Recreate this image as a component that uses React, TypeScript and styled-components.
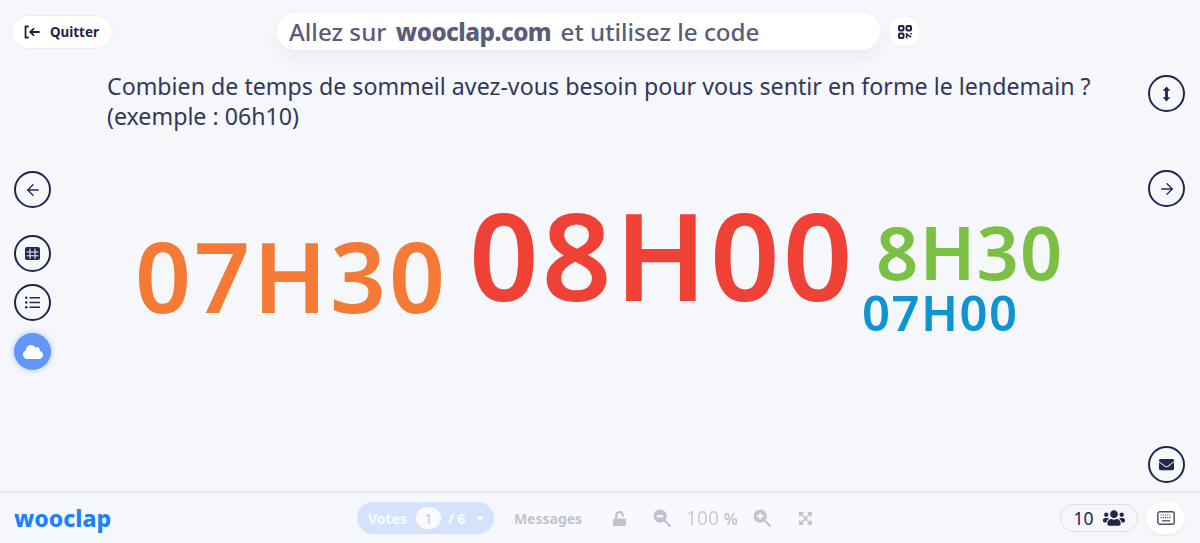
import styled, { createGlobalStyle } from "styled-components";
import { ArrowLeft, ArrowRight } from "lucide-react";
import { FaCaretDown, FaCloud, FaEnvelope, FaExpandArrowsAlt, FaUnlock, FaUsers } from "react-icons/fa";

const GlobalStyle = createGlobalStyle`
  html, body { margin: 0; padding: 0; background: #f5f7fb; }
  body { font-family: "Noto Sans", "Open Sans", sans-serif; color: #2a2e52; }
`;

const Page = styled.div`
  width: 1200px;
  height: 543px;
  display: flex;
  flex-direction: column;
  overflow: hidden;
  background: #f5f7fb;
`;

const TopBar = styled.header`
  height: 64px;
  flex: none;
  display: flex;
  align-items: flex-start;
`;

const QuitButton = styled.button`
  margin: 15px 0 0 11px;
  width: 102px;
  height: 34px;
  box-sizing: border-box;
  border: 1.5px solid #eceef6;
  border-radius: 17px;
  background: #fff;
  display: flex;
  align-items: center;
  gap: 10px;
  padding: 0 0 0 12px;
  font: 700 13.4px "Noto Sans", sans-serif;
  color: #1f2347;
`;

const CodeBanner = styled.div`
  margin: 13px 0 0 164px;
  width: 603px;
  height: 37px;
  box-sizing: border-box;
  padding-left: 12px;
  border-radius: 19px;
  background: #fff;
  box-shadow: 0 8px 16px rgba(40, 44, 90, 0.05);
  display: flex;
  align-items: center;
  white-space: pre;
  font-size: 24.2px;
  font-weight: 500;
  color: #5c5c7a;

  b {
    margin: 0 3px;
    font-weight: 800;
    letter-spacing: -0.5px;
  }
`;

const QrButton = styled.button`
  margin: 15px 0 0 8px;
  width: 33px;
  height: 33px;
  padding: 0;
  border: 1.5px solid #eceef6;
  border-radius: 50%;
  background: #fff;
  display: flex;
  align-items: center;
  justify-content: center;
`;

const Body = styled.main`
  flex: 1;
  display: flex;
  min-height: 0;
`;

const LeftRail = styled.nav`
  width: 66px;
  flex: none;
  box-sizing: border-box;
  padding: 107px 0 0 14px;
  display: flex;
  flex-direction: column;
  gap: 12px;
`;

const RightRail = styled.nav`
  width: 68px;
  flex: none;
  box-sizing: border-box;
  padding: 11px 0 8px 16px;
  display: flex;
  flex-direction: column;
`;

const RoundButton = styled.button<{ $active?: boolean; $mt?: string }>`
  width: 37px;
  height: 37px;
  flex: none;
  padding: 0;
  margin-top: ${(p) => p.$mt ?? "0"};
  box-sizing: border-box;
  border-radius: 50%;
  border: ${(p) => (p.$active ? "none" : "2px solid #23274d")};
  background: ${(p) => (p.$active ? "#6197f8" : "transparent")};
  box-shadow: ${(p) => (p.$active ? "0 0 6px rgba(97, 151, 248, 0.5)" : "none")};
  color: ${(p) => (p.$active ? "#fff" : "#23274d")};
  display: flex;
  align-items: center;
  justify-content: center;
`;

const Content = styled.section`
  flex: 1;
  min-width: 0;
  display: flex;
  flex-direction: column;
  padding-left: 41px;
`;

const Question = styled.h1`
  margin: 7px 0 0;
  font-size: 23.2px;
  font-weight: 400;
  line-height: 30px;
  color: #33375a;
  white-space: nowrap;
`;

const Cloud = styled.div`
  flex: 1;
  position: relative;
`;

const Word = styled.span<{ $x: number; $y: number; $size: number; $spacing: number; $color: string }>`
  position: absolute;
  left: ${(p) => p.$x}px;
  top: ${(p) => p.$y}px;
  font-size: ${(p) => p.$size}px;
  line-height: 0.8;
  font-weight: 600;
  letter-spacing: ${(p) => p.$spacing}em;
  color: ${(p) => p.$color};
  white-space: nowrap;
`;

const Footer = styled.footer`
  height: 52px;
  flex: none;
  box-sizing: border-box;
  border-top: 2px solid #e8e9ef;
  display: flex;
  align-items: center;
`;

const Logo = styled.div`
  margin-left: 14px;
  width: 343px;
  font-size: 23px;
  font-weight: 800;
  color: #1d83f5;
`;

const FadedGroup = styled.div`
  display: flex;
  align-items: center;
  opacity: 0.42;
`;

const VotesPill = styled.div`
  width: 137px;
  height: 32px;
  border-radius: 16px;
  background: #a9c7fb;
  color: #fff;
  display: flex;
  align-items: center;
  box-sizing: border-box;
  padding-left: 11px;
  font-size: 14px;
  font-weight: 700;
`;

const VoteCount = styled.span`
  width: 25px;
  height: 22px;
  margin: 0 7px 0 9px;
  border-radius: 12px;
  background: #fff;
  color: #8d90a8;
  font-weight: 400;
  font-size: 15px;
  display: flex;
  align-items: center;
  justify-content: center;
`;

const Caret = styled(FaCaretDown)`
  margin-left: 7px;
`;

const GhostPill = styled.div<{ $w: number; $ml: number }>`
  width: ${(p) => p.$w}px;
  height: 32px;
  margin-left: ${(p) => p.$ml}px;
  flex: none;
  box-sizing: border-box;
  border-radius: 16px;
  background: #fbfcff;
  color: #7a7d96;
  display: flex;
  align-items: center;
  justify-content: center;
  font-size: 14px;
  font-weight: 700;
`;

const ZoomValue = styled.span`
  width: 82px;
  text-align: center;
  font-size: 19px;
  font-weight: 400;
  white-space: pre;
  color: #8d90a8;

  b {
    font-size: 16px;
    font-weight: 600;
    color: #7a7d96;
  }
`;

const FooterRight = styled.div`
  margin-left: auto;
  margin-right: 15px;
  display: flex;
  align-items: center;
  gap: 8px;
`;

const Participants = styled.div`
  width: 78px;
  height: 28px;
  box-sizing: border-box;
  border: 1.5px solid #dfe1ea;
  border-radius: 14px;
  display: flex;
  align-items: center;
  justify-content: center;
  gap: 9px;
  font-size: 17.5px;
  color: #23274d;
`;

const KeyboardButton = styled.button`
  width: 39px;
  height: 32px;
  padding: 0;
  border: none;
  border-radius: 16px;
  background: #fff;
  box-shadow: 0 1px 3px rgba(40, 44, 90, 0.08);
  display: flex;
  align-items: center;
  justify-content: center;
`;

const words = [
  { text: "07H30", x: 28, y: 105, size: 98, spacing: 0.03, color: "#f47a35" },
  { text: "08H00", x: 362, y: 75, size: 122, spacing: 0.025, color: "#ef4136" },
  { text: "8H30", x: 769, y: 91, size: 74, spacing: 0.015, color: "#7ac043" },
  { text: "07H00", x: 755, y: 162, size: 49, spacing: 0.03, color: "#0f94d2" },
];

const QuitIcon = () => (
  <svg width="16" height="14" viewBox="0 0 16 14" fill="none" stroke="#1f2347" strokeWidth="1.8" strokeLinecap="round" strokeLinejoin="round">
    <path d="M4 1.5H1.5v11H4" />
    <path d="M15 7H6.5M9.5 3.8 6.2 7l3.3 3.2" />
  </svg>
);

const QrIcon = () => (
  <svg width="14" height="14" viewBox="0 0 14 14" fill="none" stroke="#1f2347" strokeWidth="2">
    <rect x="1" y="1" width="4.5" height="4.5" rx="1" />
    <rect x="8.5" y="1" width="4.5" height="4.5" rx="1" />
    <rect x="1" y="8.5" width="4.5" height="4.5" rx="1" />
    <path d="M8.6 8v5.6M8.6 9.4l4.6 2.6M13 8v1.4" strokeWidth="1.6" />
  </svg>
);

const ResizeIcon = () => (
  <svg width="9" height="16" viewBox="0 0 10 18" fill="#23274d">
    <path d="M5 0.5 9.3 5.4H6.6v7.2h2.7L5 17.5.7 12.6h2.7V5.4H.7z" />
  </svg>
);

const GridIcon = () => (
  <svg width="15" height="13" viewBox="0 0 15 13">
    <rect width="15" height="13" rx="2" fill="#23274d" />
    <path d="M5 1.5v10.5M10 1.5v10.5M1.5 5h12M1.5 8.8h12" stroke="#f5f7fb" strokeWidth="1" />
  </svg>
);

const ListIcon = () => (
  <svg width="15" height="13" viewBox="0 0 15 13" fill="#23274d">
    <circle cx="1.2" cy="1.8" r="1.2" />
    <circle cx="1.2" cy="6.5" r="1.2" />
    <circle cx="1.2" cy="11.2" r="1.2" />
    <path d="M4.5 1.8H15M4.5 6.5H15M4.5 11.2H15" stroke="#23274d" strokeWidth="1.5" />
  </svg>
);

const ZoomGlass = ({ plus }: { plus?: boolean }) => (
  <svg width="18" height="18" viewBox="0 0 18 18">
    <circle cx="7.2" cy="7.2" r="6.6" fill="#7a7d96" />
    <path d="M11.8 11.8 17 17" stroke="#7a7d96" strokeWidth="2.2" strokeLinecap="round" />
    <path d={plus ? "M4 7.2h6.4M7.2 4v6.4" : "M4 7.2h6.4"} stroke="#fff" strokeWidth="2" />
  </svg>
);

const KeyboardIcon = () => (
  <svg width="18" height="14" viewBox="0 0 18 14" fill="none">
    <rect x="0.8" y="0.8" width="16.4" height="12.4" rx="2" stroke="#4a4d68" strokeWidth="1.4" />
    <path d="M3.5 4h11M3.5 6.6h11" stroke="#4a4d68" strokeWidth="1.2" strokeDasharray="1.2 1" />
    <path d="M5 9.8h8" stroke="#4a4d68" strokeWidth="1.3" />
  </svg>
);

export default function App() {
  return (
    <Page>
      <GlobalStyle />
      <TopBar>
        <QuitButton>
          <QuitIcon />
          Quitter
        </QuitButton>
        <CodeBanner>
          Allez sur <b>wooclap.com</b> et utilisez le code
        </CodeBanner>
        <QrButton>
          <QrIcon />
        </QrButton>
      </TopBar>
      <Body>
        <LeftRail>
          <RoundButton>
            <ArrowLeft size={18} strokeWidth={1.7} />
          </RoundButton>
          <RoundButton $mt="15px">
            <GridIcon />
          </RoundButton>
          <RoundButton>
            <ListIcon />
          </RoundButton>
          <RoundButton $active>
            <FaCloud size={20} />
          </RoundButton>
        </LeftRail>
        <Content>
          <Question>
            Combien de temps de sommeil avez-vous besoin pour vous sentir en forme le lendemain ?
            <br />
            (exemple : 06h10)
          </Question>
          <Cloud>
            {words.map((w) => (
              <Word key={w.text} $x={w.x} $y={w.y} $size={w.size} $spacing={w.spacing} $color={w.color}>
                {w.text}
              </Word>
            ))}
          </Cloud>
        </Content>
        <RightRail>
          <RoundButton>
            <ResizeIcon />
          </RoundButton>
          <RoundButton $mt="58px">
            <ArrowRight size={18} strokeWidth={1.7} />
          </RoundButton>
          <RoundButton $mt="auto">
            <FaEnvelope size={15} />
          </RoundButton>
        </RightRail>
      </Body>
      <Footer>
        <Logo>wooclap</Logo>
        <FadedGroup>
          <VotesPill>
            Votes
            <VoteCount>1</VoteCount>/ 6
            <Caret size={14} />
          </VotesPill>
          <GhostPill $w={90} $ml={9}>Messages</GhostPill>
          <GhostPill $w={36} $ml={8}>
            <FaUnlock size={15} />
          </GhostPill>
          <GhostPill $w={134} $ml={8}>
            <ZoomGlass />
            <ZoomValue>
              100 <b>%</b>
            </ZoomValue>
            <ZoomGlass plus />
          </GhostPill>
          <GhostPill $w={36} $ml={8}>
            <FaExpandArrowsAlt size={15} />
          </GhostPill>
        </FadedGroup>
        <FooterRight>
          <Participants>
            10
            <FaUsers size={22} />
          </Participants>
          <KeyboardButton>
            <KeyboardIcon />
          </KeyboardButton>
        </FooterRight>
      </Footer>
    </Page>
  );
}
